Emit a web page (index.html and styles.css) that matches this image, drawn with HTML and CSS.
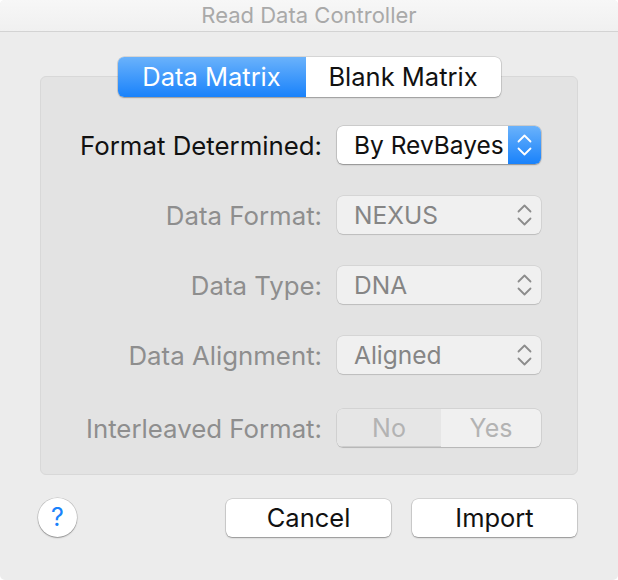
FILE: index.html
```html
<!DOCTYPE html>
<html>
<head>
<meta charset="utf-8">
<link rel="stylesheet" href="styles.css">
</head>
<body>
<div class="window">
  <div class="titlebar">Read Data Controller</div>
  <div class="content">
    <div class="tabview">
      <div class="tabs">
        <div class="tab tab-on">Data Matrix</div>
        <div class="tab">Blank Matrix</div>
      </div>
      <div class="box">
        <div class="row">
          <div class="label">Format Determined:</div>
          <div class="popup popup-on">
            <span class="ptext">By RevBayes</span>
            <span class="arrows arrows-on">
              <svg width="15" height="24" viewBox="0 0 15 24"><path d="M1.5 8.5 L7.5 2.5 L13.5 8.5 M1.5 15.5 L7.5 21.5 L13.5 15.5" fill="none" stroke="#fff" stroke-width="1.8" stroke-linecap="round" stroke-linejoin="round"/></svg>
            </span>
          </div>
        </div>
        <div class="row">
          <div class="label off">Data Format:</div>
          <div class="popup">
            <span class="ptext">NEXUS</span>
            <span class="arrows">
              <svg width="15" height="24" viewBox="0 0 15 24"><path d="M1.5 8.5 L7.5 2.5 L13.5 8.5 M1.5 15.5 L7.5 21.5 L13.5 15.5" fill="none" stroke="#8c8c8c" stroke-width="1.8" stroke-linecap="round" stroke-linejoin="round"/></svg>
            </span>
          </div>
        </div>
        <div class="row">
          <div class="label off">Data Type:</div>
          <div class="popup">
            <span class="ptext">DNA</span>
            <span class="arrows">
              <svg width="15" height="24" viewBox="0 0 15 24"><path d="M1.5 8.5 L7.5 2.5 L13.5 8.5 M1.5 15.5 L7.5 21.5 L13.5 15.5" fill="none" stroke="#8c8c8c" stroke-width="1.8" stroke-linecap="round" stroke-linejoin="round"/></svg>
            </span>
          </div>
        </div>
        <div class="row">
          <div class="label off">Data Alignment:</div>
          <div class="popup">
            <span class="ptext">Aligned</span>
            <span class="arrows">
              <svg width="15" height="24" viewBox="0 0 15 24"><path d="M1.5 8.5 L7.5 2.5 L13.5 8.5 M1.5 15.5 L7.5 21.5 L13.5 15.5" fill="none" stroke="#8c8c8c" stroke-width="1.8" stroke-linecap="round" stroke-linejoin="round"/></svg>
            </span>
          </div>
        </div>
        <div class="row row-last">
          <div class="label off">Interleaved Format:</div>
          <div class="seg">
            <div class="seg-item seg-sel">No</div>
            <div class="seg-item">Yes</div>
          </div>
        </div>
      </div>
    </div>
    <div class="footer">
      <div class="help">?</div>
      <div class="buttons">
        <div class="btn">Cancel</div>
        <div class="btn">Import</div>
      </div>
    </div>
  </div>
</div>
</body>
</html>
```
FILE: styles.css
```css
html, body {
  margin: 0;
  padding: 0;
  background: #ffffff;
}
body {
  font-family: "Inter", "Liberation Sans", sans-serif;
  width: 618px;
  height: 580px;
  overflow: hidden;
}
.window {
  width: 618px;
  height: 580px;
  box-sizing: border-box;
  background: #ececec;
  border-radius: 5px;
  overflow: hidden;
  display: flex;
  flex-direction: column;
}
.titlebar {
  height: 31px;
  flex: 0 0 31px;
  background: linear-gradient(#f7f7f7, #f0f0f0);
  border-bottom: 1px solid #d3d3d3;
  color: #a9a9a9;
  font-size: 22px;
  line-height: 31px;
  text-align: center;
}
.content {
  padding: 25px 40px 0 40px;
  display: flex;
  flex-direction: column;
}
.tabview {
  display: flex;
  flex-direction: column;
  align-items: center;
}
.tabs {
  position: relative;
  z-index: 2;
  display: flex;
  height: 40px;
  margin-bottom: -21px;
  border-radius: 6px;
  box-shadow: 0 0 0 0.5px rgba(0,0,0,0.18), 0 1px 1.5px rgba(0,0,0,0.25);
  background: #fff;
  overflow: hidden;
}
.tab {
  height: 40px;
  line-height: 40px;
  font-size: 25.5px;
  color: #111;
  text-align: center;
  width: 195px;
}
.tab-on {
  width: 188px;
  color: #fff;
  background: linear-gradient(#6ab2fb, #1982fb);
}
.box {
  width: 538px;
  box-sizing: border-box;
  height: 399px;
  background: #e3e3e3;
  border: 1px solid #d8d8d8;
  border-radius: 6px;
  padding: 49px 36px 0 0;
  display: flex;
  flex-direction: column;
  gap: 32px;
}
.row {
  display: grid;
  grid-template-columns: 1fr 204px;
  column-gap: 15px;
  align-items: center;
  height: 38px;
}
.row-last {
  margin-top: 3px;
}
.label {
  text-align: right;
  font-size: 25.8px;
  color: #111;
  white-space: nowrap;
}
.label.off {
  color: #8e8e8e;
}
.popup {
  height: 38px;
  box-sizing: border-box;
  border-radius: 6px;
  background: #f0f0f0;
  box-shadow: 0 0 0 0.5px rgba(0,0,0,0.12), 0 1px 1px rgba(0,0,0,0.12);
  display: flex;
  align-items: center;
  overflow: hidden;
  color: #858585;
  font-size: 24.5px;
}
.popup-on {
  background: #fff;
  color: #111;
  box-shadow: 0 0 0 0.5px rgba(0,0,0,0.2), 0 1px 1.5px rgba(0,0,0,0.3);
}
.ptext {
  flex: 1;
  padding-left: 17px;
  white-space: nowrap;
  overflow: hidden;
}
.arrows {
  width: 33px;
  flex: 0 0 33px;
  height: 100%;
  display: flex;
  align-items: center;
  justify-content: center;
}
.arrows-on {
  background: linear-gradient(#6ab2fb, #1982fb);
}
.seg {
  height: 38px;
  display: flex;
  border-radius: 6px;
  overflow: hidden;
  background: #f0f0f0;
  box-shadow: 0 0 0 0.5px rgba(0,0,0,0.14), 0 1px 1px rgba(0,0,0,0.14);
}
.seg-item {
  flex: 1;
  text-align: center;
  line-height: 38px;
  font-size: 25px;
  color: #b3b3b3;
}
.seg-sel {
  flex: 0 0 104px;
  background: #e6e6e6;
  box-shadow: inset 0 -1px 0 rgba(0,0,0,0.1);
}
.footer {
  margin-top: 23px;
  display: flex;
  align-items: center;
  justify-content: space-between;
}
.help {
  width: 39px;
  height: 39px;
  margin-left: -2px;
  border-radius: 50%;
  background: #fff;
  box-shadow: 0 0 0 0.5px rgba(0,0,0,0.2), 0 1px 1.5px rgba(0,0,0,0.3);
  color: #1a82fb;
  font-size: 25px;
  text-align: center;
  line-height: 39px;
}
.buttons {
  display: flex;
  gap: 21px;
  margin-right: 1px;
}
.btn {
  width: 165px;
  height: 38px;
  border-radius: 6px;
  background: #fff;
  box-shadow: 0 0 0 0.5px rgba(0,0,0,0.2), 0 1px 1.5px rgba(0,0,0,0.3);
  font-size: 25.5px;
  line-height: 38px;
  text-align: center;
  color: #111;
}
```
